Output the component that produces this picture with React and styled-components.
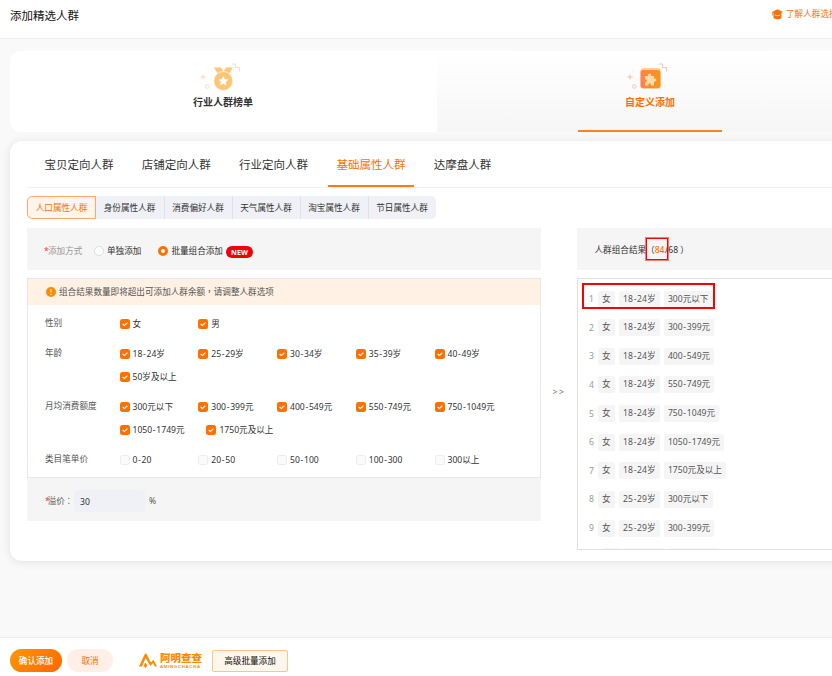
import styled, { createGlobalStyle, css } from 'styled-components';
import { useState } from 'react';

const GlobalStyle = createGlobalStyle`
  *, *::before { box-sizing: border-box; }
  body {
    margin: 0;
    overflow: hidden;
    background: #f9f9f9;
    color: #333;
    font-family: 'Noto Sans', 'Noto Sans CJK SC', sans-serif;
    font-size: 8.6px;
    line-height: 12px;
  }
`;

const Page = styled.div`
  width: 832px;
  height: 676px;
  display: flex;
  flex-direction: column;
  overflow: hidden;
`;

const Header = styled.header`
  flex: none;
  height: 39px;
  display: flex;
  justify-content: space-between;
  padding-left: 10px;
  background: #fff;
  border-bottom: 1px solid #f0f0f0;
`;

const PageTitle = styled.h1`
  margin: 7px 0 0;
  font-size: 11.5px;
  line-height: 18px;
  font-weight: 400;
  color: #111;
`;

const HelpLink = styled.a`
  width: 60px;
  height: 12px;
  margin-top: 8px;
  display: flex;
  align-items: center;
  gap: 3px;
  color: #ff7000;
  white-space: nowrap;

  svg { flex: none; }
`;

const Content = styled.main`
  flex: 1;
  padding: 12px 0 0 10px;
`;

const ModeCard = styled.div`
  width: 854px;
  height: 81px;
  display: flex;
  border-radius: 10px;
  overflow: hidden;
  background: #fff;
`;

const Mode = styled.div`
  flex: 1;
  display: flex;
  flex-direction: column;
  align-items: center;
  padding: 12px 1px 0 0;
  font-size: 10px;
  line-height: 14px;
  font-weight: 700;
  ${({ $active }) => $active && css`
    color: #ff7000;
    background: linear-gradient(#fff, #f6f6f6);
  `}

  svg { margin-right: 6px; }
  span { margin-top: 4px; }
`;

const ModeLine = styled.div`
  width: 144px;
  height: 2px;
  margin-top: auto;
  background: #ff8121;
`;

const MainCard = styled.section`
  width: 854px;
  height: 420px;
  margin-top: 9px;
  padding: 0 17px;
  border-radius: 12px;
  background: #fff;
  box-shadow: 0 1px 10px rgba(0, 0, 0, 0.1);
`;

const Tabs = styled.nav`
  height: 47px;
  display: flex;
  gap: 11.3px;
  padding-left: 9px;
  border-bottom: 1px solid #f2f2f2;
`;

const Tab = styled.div`
  height: 46px;
  padding: 15px 8.5px 0;
  font-size: 11.5px;
  line-height: 18px;
  cursor: pointer;
  color: ${({ $active }) => ($active ? '#ff7000' : '#333')};
  border-bottom: 2px solid ${({ $active }) => ($active ? '#ff7a15' : 'transparent')};
`;

const SubTabs = styled.div`
  display: flex;
  margin-top: 8px;
`;

const SubTab = styled.div`
  width: 68px;
  height: 23px;
  display: flex;
  align-items: center;
  justify-content: center;
  padding-right: 1px;
  background: #eff1f6;
  border-left: 1px solid #dfe2e9;

  &:first-child {
    width: 69px;
    padding: 0;
    border-radius: 5px 0 0 5px;
  }
  &:nth-child(2) { border-left: 0; }
  &:last-child { border-radius: 0 5px 5px 0; }

  ${({ $active }) => $active && css`
    color: #ff7000;
    background: #fff5ec;
    border: 1px solid #ffa765;
  `}
`;

const Columns = styled.div`
  display: flex;
  margin-top: 9px;
`;

const FormColumn = styled.div`
  flex: none;
  width: 514px;
`;

const Strip = styled.div`
  height: 42px;
  display: flex;
  align-items: center;
  padding: 4px 0 0 17px;
  background: #f5f5f5;
`;

const Required = styled.span`
  color: #f33;
  letter-spacing: -0.8px;
`;

const StripLabel = styled.span`
  width: 50px;
  color: #999;
`;

const Radio = styled.label`
  display: flex;
  align-items: center;
  gap: 3px;
  margin-right: 17px;

  &::before {
    content: '';
    width: 10px;
    height: 10px;
    border-radius: 50%;
    background: #fff;
    border: ${({ $on }) => ($on ? '3px solid #ff7000' : '1px solid #ddd')};
  }
  & + & { margin-right: 3px; }
`;

const NewBadge = styled.span`
  width: 27px;
  height: 12px;
  margin-top: 1px;
  border-radius: 6px;
  background: #f00008;
  color: #fff;
  font: 700 7.2px/12px 'Noto Sans', sans-serif;
  text-align: center;
`;

const Panel = styled.div`
  height: 200px;
  margin-top: 8px;
  border: 1px solid #e8e8e8;
`;

const Alert = styled.div`
  height: 26px;
  display: flex;
  align-items: center;
  gap: 3px;
  padding-left: 18px;
  color: #555;
  background: #fff1e4;

  span { margin-top: -1px; }
`;

// the TC face centres the comma and the colon in their box
const Mark = styled.span`
  font-family: 'Noto Sans CJK TC', sans-serif;
`;

const Field = styled.div`
  display: flex;
  padding-left: 17px;
  margin-top: 7px;
`;

const FieldLabel = styled.div`
  width: 74.5px;
  flex: none;
  line-height: 23px;
  color: #555;
`;

const Options = styled.div`
  width: 410px;
  display: flex;
  flex-wrap: wrap;
`;

const Option = styled.label`
  min-width: 78.75px;
  height: 23px;
  display: flex;
  align-items: center;
  gap: 3px;
  padding-right: 21.8px;
  white-space: nowrap;
`;

const Box = styled.span`
  width: 10px;
  height: 10px;
  display: flex;
  align-items: center;
  justify-content: center;
  border-radius: 2.5px;
  background: ${({ $on }) => ($on ? '#ff7000' : '#fafafa')};
  border: ${({ $on }) => ($on ? '0' : '1px solid #ececec')};
`;

const Dash = styled.span`
  padding: 0 0.7px;
`;

const PremiumBar = styled.div`
  height: 43px;
  display: flex;
  align-items: center;
  padding: 2px 0 0 18px;
  color: #555;
  background: #f5f5f5;
`;

const PremiumLabel = styled.span`
  width: 29px;
  white-space: nowrap;
  letter-spacing: -0.2px;

  ${Required} { letter-spacing: -2px; }
`;

const PremiumInput = styled.input`
  width: 71px;
  height: 22px;
  margin-right: 4px;
  padding: 2px 6px 0;
  border: 0;
  border-radius: 4px;
  background: #eff1f6;
  color: #333;
  font: inherit;
`;

const Arrow = styled.div`
  flex: none;
  width: 36px;
  padding-top: 158px;
  text-align: center;
  letter-spacing: 1.6px;
  color: #777;
`;

const ResultColumn = styled.div`
  width: 287px;
  flex: none;
`;

const ResultTitle = styled(Strip)`
  padding: 2px 0 0 17.5px;
  white-space: nowrap;
`;

const Count = styled.span`
  position: relative;
  margin-right: 0.6px;
  color: #ff7000;
  font-weight: 500;
`;

const CountMark = styled.span`
  position: absolute;
  left: -9px;
  top: -6px;
  width: 22px;
  height: 22px;
  border: 1px solid #f00;
  outline: 0.5px solid rgba(255, 0, 0, 0.5);
`;

const ResultList = styled.div`
  position: relative;
  height: 272px;
  margin-top: 8px;
  padding: 11.5px 0 0 11px;
  border: 1px solid #e0e0e0;
  overflow: hidden;
`;

const RowMark = styled.span`
  position: absolute;
  left: 4px;
  top: 4px;
  width: 133px;
  height: 26px;
  border: 2px solid #f00;
`;

const ResultRow = styled.div`
  height: 17px;
  display: flex;
  align-items: center;
  gap: 4px;
  margin-bottom: 11.65px;
  color: #999;
`;

const Tag = styled.span`
  height: 17px;
  padding: 0 4.2px;
  line-height: 17px;
  border-radius: 2.5px;
  background: #f5f5f5;
  color: #555;
  white-space: nowrap;
`;

const Footer = styled.footer`
  flex: none;
  height: 39px;
  display: flex;
  align-items: center;
  padding: 7px 10px 0;
  background: #fff;
  border-top: 1px solid #eee;
`;

const Button = styled.button`
  width: ${({ $primary }) => ($primary ? 52 : 46)}px;
  height: 23px;
  margin-right: 5px;
  padding: 0;
  border: 0;
  border-radius: 12px;
  font: inherit;
  font-weight: ${({ $primary }) => ($primary ? 500 : 400)};
  color: ${({ $primary }) => ($primary ? '#fff' : '#ff7000')};
  background: ${({ $primary }) => ($primary ? 'linear-gradient(135deg, #ff9800, #ff6600)' : '#ffefe6')};
`;

const BatchButton = styled.button`
  width: 76px;
  height: 22px;
  margin-left: 10px;
  padding: 0;
  border: 1px solid #ffc58c;
  border-radius: 2px;
  background: #fff6ec;
  color: #111;
  font: inherit;
`;

const Brand = styled.div`
  display: flex;
  align-items: center;
  gap: 3px;
  width: 63px;
  height: 18px;
  margin-left: 21px;
  color: #ff8a00;

  svg { flex: none; }
`;

const BrandWords = styled.div`
  display: flex;
  flex-direction: column;
  white-space: nowrap;
`;

const BrandName = styled.span`
  height: 12px;
  font: 900 10.5px/12px 'Noto Sans CJK SC', sans-serif;
`;

const BrandLatin = styled.span`
  height: 5px;
  font: 700 4.4px/5px 'Liberation Sans', sans-serif;
  letter-spacing: 0.65px;
`;

const Sparkles = ({ color }) => (
  <g fill="none" stroke={color} strokeWidth="0.9">
    <path d="M3 11.500v5M.5 14h5" />
    <path d="M32 1h3.500v3.500h4v4" opacity=".85" />
    <circle cx="7.300" cy="23.500" r="1.800" opacity=".8" />
    <path d="M37 23h1M5.500 8h1" opacity=".45" />
  </g>
);

const MedalIcon = () => (
  <svg width="40" height="28" viewBox="0 0 40 28">
    <Sparkles color="#ffd2b5" />
    <path d="M14 4.500h7l2.500 4 2.500-4h7l-4 6.500H18z" fill="#fdc675" />
    <circle cx="23.300" cy="18" r="9.500" fill="#fdc675" stroke="#fff" strokeWidth=".7" />
    <path d="M23.300 13l1.500 3.200 3.500.4-2.600 2.400.7 3.500-3.100-1.700-3.100 1.700.7-3.500-2.600-2.400 3.500-.4z" fill="#fff" />
  </svg>
);

const PuzzleIcon = () => (
  <svg width="40" height="28" viewBox="0 0 40 28">
    <defs>
      <linearGradient id="puzzle" x1="0" x2="1">
        <stop offset="0" stopColor="#ff8250" />
        <stop offset="1" stopColor="#f99517" />
      </linearGradient>
    </defs>
    <Sparkles color="#ffb48e" />
    <rect x="13.500" y="5" width="20" height="21" rx="3" fill="#ffcf98" />
    <rect x="13.500" y="7" width="20" height="18" rx="2.500" fill="url(#puzzle)" />
    <path d="M18 13h3.200c-.9-3.200 3.900-3.200 3 0h2.800v2.500c3.200-.8 3.200 3.700 0 2.900v4h-3c.4-2.500-3.100-2.500-2.700 0H18v-3c2.400.4 2.400-3.400 0-3z" fill="#ffdca5" />
  </svg>
);

const CapIcon = () => (
  <svg width="11" height="11" viewBox="0 0 11 11" fill="#ff7000">
    <path d="M5.500.3l5.400 2.700-5.400 2.600L.1 3z" />
    <path d="M1.500 3h8v5.700c-1.800 2.200-6.200 2.200-8 0z" />
    <path d="M.3 3h.9v3.500H.3z" />
    <path d="M2.800 5.800c1.600 1.200 3.800 1.200 5.400 0" fill="none" stroke="#fff" strokeWidth=".8" />
  </svg>
);

const WarnIcon = () => (
  <svg width="10" height="10" viewBox="0 0 10 10">
    <circle cx="5" cy="5" r="5" fill="#ff8a00" />
    <path d="M5 2.200v3.400M5 6.700v1.200" stroke="#fff" strokeWidth="1.100" />
  </svg>
);

const Tick = () => (
  <svg width="8" height="8" viewBox="0 0 8 8">
    <path d="M1.700 4l1.700 1.600L6.400 2.600" fill="none" stroke="#fff" strokeWidth="1.100" />
  </svg>
);

const BrandLogo = () => (
  <Brand>
    <svg width="18" height="17" viewBox="0 0 18 17" fill="#ff8a00">
      <path d="M0 14.500L5.300 3 6.700 1l1.400 2 3.600 7.500 2.800-2.800 3.500 6.800h-2.200l-1.700-3.600-2.700 3-4.800-7.800-3.600 8.400z" />
      <path d="M6.500 10.500l1.800 3-1.800 3-1.800-3z" />
    </svg>
    <BrandWords>
      <BrandName>阿明查查</BrandName>
      <BrandLatin>AMINGCHACHA</BrandLatin>
    </BrandWords>
  </Brand>
);

// gives the hyphen of a range a little air
const RangeText = ({ children }) => {
  const [from, to] = children.split('-');
  return <span>{from}{to && <><Dash>-</Dash>{to}</>}</span>;
};

const tabs = ['宝贝定向人群', '店铺定向人群', '行业定向人群', '基础属性人群', '达摩盘人群'];
const subTabs = ['人口属性人群', '身份属性人群', '消费偏好人群', '天气属性人群', '淘宝属性人群', '节日属性人群'];

const fields = [
  { label: '性别', on: true, options: ['女', '男'] },
  { label: '年龄', on: true, options: ['18-24岁', '25-29岁', '30-34岁', '35-39岁', '40-49岁', '50岁及以上'] },
  { label: '月均消费额度', on: true, options: ['300元以下', '300-399元', '400-549元', '550-749元', '750-1049元', '1050-1749元', '1750元及以上'] },
  { label: '类目笔单价', on: false, options: ['0-20', '20-50', '50-100', '100-300', '300以上'] },
];

const results = [
  ['18-24岁', '300元以下'],
  ['18-24岁', '300-399元'],
  ['18-24岁', '400-549元'],
  ['18-24岁', '550-749元'],
  ['18-24岁', '750-1049元'],
  ['18-24岁', '1050-1749元'],
  ['18-24岁', '1750元及以上'],
  ['25-29岁', '300元以下'],
  ['25-29岁', '300-399元'],
  ['25-29岁', '400-549元'],
];

const App = () => {
  const [tab, setTab] = useState(3);
  const [subTab, setSubTab] = useState(0);
  const [premium, setPremium] = useState('30');

  return (
    <Page>
      <GlobalStyle />
      <Header>
        <PageTitle>添加精选人群</PageTitle>
        <HelpLink><CapIcon />了解人群选择</HelpLink>
      </Header>
      <Content>
        <ModeCard>
          <Mode><MedalIcon /><span>行业人群榜单</span></Mode>
          <Mode $active><PuzzleIcon /><span>自定义添加</span><ModeLine /></Mode>
        </ModeCard>
        <MainCard>
          <Tabs>
            {tabs.map((name, i) => (
              <Tab key={name} $active={i === tab} onClick={() => setTab(i)}>{name}</Tab>
            ))}
          </Tabs>
          <SubTabs>
            {subTabs.map((name, i) => (
              <SubTab key={name} $active={i === subTab} onClick={() => setSubTab(i)}>{name}</SubTab>
            ))}
          </SubTabs>
          <Columns>
            <FormColumn>
              <Strip>
                <StripLabel><Required>*</Required>添加方式</StripLabel>
                <Radio>单独添加</Radio>
                <Radio $on>批量组合添加</Radio>
                <NewBadge>NEW</NewBadge>
              </Strip>
              <Panel>
                <Alert>
                  <WarnIcon />
                  <span>组合结果数量即将超出可添加人群余额<Mark>，</Mark>请调整人群选项</span>
                </Alert>
                {fields.map(({ label, on, options }) => (
                  <Field key={label}>
                    <FieldLabel>{label}</FieldLabel>
                    <Options>
                      {options.map((text) => (
                        <Option key={text}>
                          <Box $on={on}>{on && <Tick />}</Box>
                          <RangeText>{text}</RangeText>
                        </Option>
                      ))}
                    </Options>
                  </Field>
                ))}
              </Panel>
              <PremiumBar>
                <PremiumLabel><Required>*</Required>溢价<Mark>：</Mark></PremiumLabel>
                <PremiumInput value={premium} onChange={(e) => setPremium(e.target.value)} />
                %
              </PremiumBar>
            </FormColumn>
            <Arrow>&gt;&gt;</Arrow>
            <ResultColumn>
              <ResultTitle>
                <span>人群组合结果（<Count>84<CountMark /></Count>/68 ）</span>
              </ResultTitle>
              <ResultList>
                {results.map(([age, spend], i) => (
                  <ResultRow key={age + spend}>
                    {i + 1}
                    <Tag>女</Tag>
                    <Tag><RangeText>{age}</RangeText></Tag>
                    <Tag><RangeText>{spend}</RangeText></Tag>
                  </ResultRow>
                ))}
                <RowMark />
              </ResultList>
            </ResultColumn>
          </Columns>
        </MainCard>
      </Content>
      <Footer>
        <Button $primary>确认添加</Button>
        <Button>取消</Button>
        <BrandLogo />
        <BatchButton>高级批量添加</BatchButton>
      </Footer>
    </Page>
  );
};

export default App;
